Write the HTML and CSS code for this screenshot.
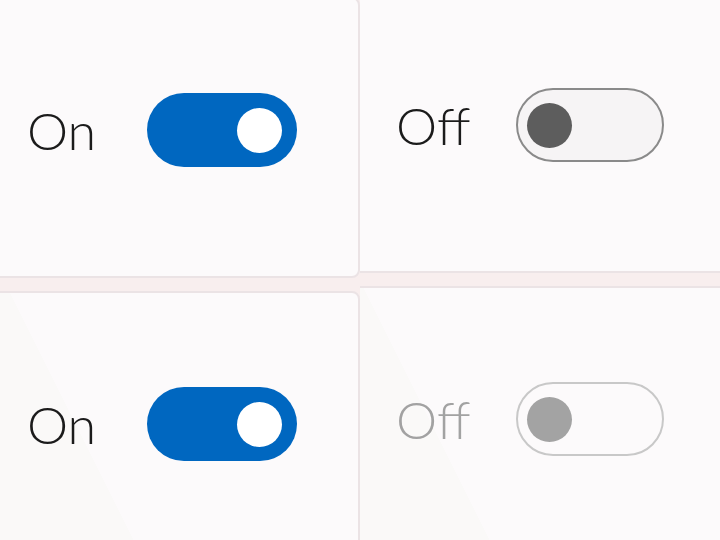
FILE: index.html
```html
<!DOCTYPE html>
<html lang="en">
<head>
    <meta charset="UTF-8">
    <meta name="viewport" content="width=device-width, initial-scale=1.0">
    <title>Toggle switches</title>
    <link rel="stylesheet" href="styles.css">
</head>
<body>
    <div class="board">
        <div class="column column-left">
            <div class="card">
                <div class="toggle-row">
                    <span class="label">On</span>
                    <span class="switch is-on"><span class="knob"></span></span>
                </div>
            </div>
            <div class="card card-shaded">
                <div class="toggle-row">
                    <span class="label">On</span>
                    <span class="switch is-on"><span class="knob"></span></span>
                </div>
            </div>
        </div>
        <div class="column column-right">
            <div class="card">
                <div class="toggle-row">
                    <span class="label">Off</span>
                    <span class="switch is-off"><span class="knob"></span></span>
                </div>
            </div>
            <div class="card card-shaded">
                <div class="toggle-row">
                    <span class="label label-disabled">Off</span>
                    <span class="switch is-off is-disabled"><span class="knob"></span></span>
                </div>
            </div>
        </div>
    </div>
</body>
</html>
```

FILE: styles.css
```css
body {
    margin: 0;
    background: #f8eeee;
    overflow: hidden;
    font-family: Lato, "Open Sans", sans-serif;
    color: #1b1b1b;
}
.board {
    display: flex;
    width: 740px;
    margin-left: -10px;
}
.column {
    display: flex;
    flex-direction: column;
    gap: 13px;
}
.column-left {
    width: 370px;
    margin-top: -3px;
}
.column-right {
    flex: 1;
    margin-top: -8px;
}
.card {
    box-sizing: border-box;
    height: 281px;
    padding: 94px 0 0 35px;
    background: #fcfafb;
    border: 2px solid #ebe3e5;
    border-radius: 8px;
}
.column-right .card {
    border-left: none;
    border-radius: 0 8px 8px 0;
    padding-left: 36px;
}
.card-shaded {
    background: linear-gradient(63.4deg, #faf9f8 140px, #fcfafb 140px);
}
.column-right .card-shaded {
    background: linear-gradient(63.4deg, #faf9f8 127px, #fcfafb 127px);
}
.toggle-row {
    display: flex;
    align-items: center;
}
.label {
    width: 120px;
    font-size: 52px;
    font-weight: 300;
    line-height: 1;
}
.label-disabled {
    color: #a2a2a2;
}
.switch {
    box-sizing: border-box;
    display: flex;
    align-items: center;
    width: 150px;
    height: 74px;
    border-radius: 37px;
}
.knob {
    width: 45px;
    height: 45px;
    border-radius: 50%;
    background: #ffffff;
}
.is-on {
    justify-content: flex-end;
    padding-right: 15px;
    background: #0067c0;
}
.is-off {
    width: 148px;
    padding-left: 9px;
    background: #f6f4f5;
    border: 2px solid #8a8a8a;
}
.is-off .knob {
    background: #5d5d5d;
}
.is-disabled {
    background: transparent;
    border-color: #c8c8c8;
}
.is-disabled .knob {
    background: #a3a3a3;
}
```
